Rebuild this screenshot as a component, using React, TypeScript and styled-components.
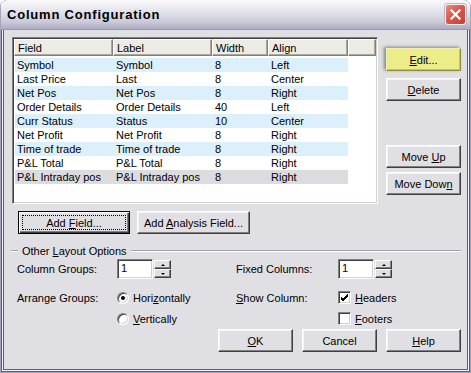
import React from "react";
import styled, { createGlobalStyle, css } from "styled-components";

const GlobalStyle = createGlobalStyle`
  html, body {
    margin: 0;
    padding: 0;
    background: #ffffff;
  }
  body {
    font-family: "Liberation Sans", Arial, sans-serif;
    font-size: 11px;
    color: #000;
  }
`;

const COLS = "99px 99px 56px 80px";

const rows = [
  ["Symbol", "Symbol", "8", "Left"],
  ["Last Price", "Last", "8", "Center"],
  ["Net Pos", "Net Pos", "8", "Right"],
  ["Order Details", "Order Details", "40", "Left"],
  ["Curr Status", "Status", "10", "Center"],
  ["Net Profit", "Net Profit", "8", "Right"],
  ["Time of trade", "Time of trade", "8", "Right"],
  ["P&L Total", "P&L Total", "8", "Right"],
  ["P&L Intraday pos", "P&L Intraday pos", "8", "Right"],
];

const Window = styled.div`
  width: 471px;
  height: 373px;
  box-sizing: border-box;
  display: flex;
  flex-direction: column;
  background: #e0dfe3;
  border-radius: 8px 8px 0 0;
  overflow: hidden;
  box-shadow: inset 0 0 0 1px #a4a3bb, inset 0 0 0 2px #5e5d7c,
    inset 0 0 0 3px #f3f3f7, inset 0 0 0 4px #5e5d7c;
`;

const TitleBar = styled.div`
  height: 30px;
  flex: none;
  display: flex;
  align-items: center;
  justify-content: space-between;
  padding: 0 5px 1px 7px;
  box-sizing: border-box;
  background: linear-gradient(
    #fbfbfd 0%,
    #ebebf1 25%,
    #dcdce6 50%,
    #c8c8d6 75%,
    #aeadc4 95%,
    #8f8eaa 100%
  );
  box-shadow: inset 1px 0 #a4a3bb, inset -1px 0 #a4a3bb;
`;

const Title = styled.span`
  font-family: "Liberation Sans", Arial, sans-serif;
  font-weight: bold;
  font-size: 13px;
  letter-spacing: 0.8px;
  color: #000;
`;

const CloseButton = styled.div`
  width: 21px;
  height: 21px;
  box-sizing: border-box;
  border: 1px solid #f4f0f0;
  border-radius: 3px;
  background: linear-gradient(135deg, #ec8a7c 0%, #d9594b 45%, #c8412f 100%);
  display: flex;
  align-items: center;
  justify-content: center;
  box-shadow: 0 0 0 1px #b8b6c8;
`;

const Client = styled.div`
  flex: 1;
  display: flex;
  flex-direction: column;
  padding: 7px 10px 0 12px;
`;

const TopRow = styled.div`
  display: flex;
  gap: 8px;
  height: 167px;
`;

const sunken = css`
  box-sizing: border-box;
  border: 1px solid;
  border-color: #808080 #ffffff #ffffff #808080;
  box-shadow: inset 1px 1px #404040, inset -1px -1px #d4d0c8;
`;

const ListView = styled.div`
  ${sunken};
  width: 366px;
  height: 167px;
  background: #ffffff;
  padding: 1px;
`;

const HeaderRow = styled.div`
  display: grid;
  grid-template-columns: ${COLS} 1fr;
  height: 17px;
`;

const HeaderCell = styled.div`
  box-sizing: border-box;
  background: #ecebe6;
  border-top: 1px solid #ffffff;
  border-left: 1px solid #ffffff;
  border-right: 1px solid #808080;
  border-bottom: 1px solid #808080;
  box-shadow: inset -1px -1px #aca899;
  padding: 1px 0 0 3px;
  line-height: 14px;
  white-space: nowrap;
  overflow: hidden;
`;

const Rows = styled.div`
  margin-top: 2px;
`;

const Row = styled.div<{ $tone: "blue" | "white" | "gray" }>`
  display: grid;
  grid-template-columns: ${COLS};
  width: 333px;
  margin-left: 1px;
  height: 14px;
  line-height: 14px;
  background: ${(p) =>
    p.$tone === "blue" ? "#dcf0fc" : p.$tone === "gray" ? "#dcdbe0" : "#ffffff"};
`;

const Cell = styled.div`
  padding-left: 2px;
  white-space: nowrap;
  overflow: hidden;
`;

const SideButtons = styled.div`
  display: flex;
  flex-direction: column;
  width: 75px;
  padding: 11px 0 9px;
  box-sizing: border-box;
`;

const Button = styled.div<{ $w?: number; $mt?: number; $default?: boolean; $hot?: boolean }>`
  width: ${(p) => p.$w ?? 75}px;
  height: 23px;
  margin-top: ${(p) => p.$mt ?? 0}px;
  box-sizing: border-box;
  display: flex;
  align-items: center;
  justify-content: center;
  position: relative;
  background: #e0dfe3;
  border: 1px solid;
  border-color: #ffffff #404040 #404040 #ffffff;
  box-shadow: inset -1px -1px #808080, inset 1px 1px #f4f4f6;
  flex: none;
  ${(p) =>
    p.$default &&
    css`
      border: 1px solid #000;
      box-shadow: inset 1px 1px #ffffff, inset -1px -1px #404040,
        inset -2px -2px #808080;
      &::after {
        content: "";
        position: absolute;
        inset: 3px;
        border: 1px dotted #000;
      }
    `}
  ${(p) =>
    p.$hot &&
    css`
      background: #ecec88;
      border-color: #f2f2b8 #8e8e46 #8e8e46 #f2f2b8;
      box-shadow: inset -1px -1px #c4c468, -2px -1px 3px rgba(60, 60, 60, 0.55);
    `}
`;

const MoveUp = styled(Button)`
  margin-top: auto;
`;

const FieldButtons = styled.div`
  display: flex;
  gap: 7px;
  margin-top: 7px;
  padding-left: 6px;
`;

const GroupHeading = styled.div`
  display: flex;
  align-items: center;
  gap: 4px;
  margin-top: 10px;
  height: 14px;
  width: 449px;
  &::before,
  &::after {
    content: "";
    height: 0;
    border-top: 1px solid #a0a0a8;
    border-bottom: 1px solid #ffffff;
  }
  &::before {
    width: 7px;
    margin-left: -1px;
  }
  &::after {
    flex: 1;
  }
`;

const OptionsGrid = styled.div`
  display: grid;
  grid-template-columns: 100px 119px 102px auto;
  grid-template-rows: 28px 21px 21px;
  align-items: center;
  padding-left: 5px;
  margin-top: 1px;
`;

const TopCell = styled.div`
  align-self: start;
  height: 20px;
  display: flex;
  align-items: center;
`;

const Label = styled.span``;

const Spin = styled.div`
  display: flex;
  gap: 1px;
  height: 20px;
`;

const SpinEdit = styled.div`
  ${sunken};
  width: 36px;
  height: 20px;
  background: #fff;
  padding-left: 3px;
  line-height: 17px;
`;

const SpinButtons = styled.div`
  display: flex;
  flex-direction: column;
  width: 17px;
  padding: 1px 0;
  box-sizing: border-box;
`;

const SpinHalf = styled.div`
  flex: 1;
  box-sizing: border-box;
  background: #e0dfe3;
  border: 1px solid;
  border-color: #ffffff #404040 #404040 #ffffff;
  box-shadow: inset -1px -1px #808080;
  display: flex;
  align-items: center;
  justify-content: center;
`;

const Arrow = styled.div<{ $down?: boolean }>`
  width: 0;
  height: 0;
  border-left: 2px solid transparent;
  border-right: 2px solid transparent;
  ${(p) =>
    p.$down
      ? "border-top: 2px solid #000;"
      : "border-bottom: 2px solid #000;"}
`;

const Choice = styled.label`
  display: flex;
  align-items: center;
  gap: 4px;
`;

const Radio = styled.span<{ $on?: boolean }>`
  width: 12px;
  height: 12px;
  box-sizing: border-box;
  border-radius: 50%;
  background: #fff;
  border: 1px solid;
  border-color: #808080 #ffffff #ffffff #808080;
  box-shadow: inset 1px 1px #404040, inset -1px -1px #d4d0c8;
  display: flex;
  align-items: center;
  justify-content: center;
  &::after {
    content: "";
    width: 4px;
    height: 4px;
    border-radius: 50%;
    background: ${(p) => (p.$on ? "#000" : "transparent")};
  }
`;

const Check = styled.span`
  ${sunken};
  width: 13px;
  height: 13px;
  background: #fff;
  display: flex;
  align-items: center;
  justify-content: center;
`;

const DialogButtons = styled.div`
  display: flex;
  justify-content: flex-end;
  gap: 9px;
  width: 449px;
`;

const CheckMark = () => (
  <svg width="9" height="9" viewBox="0 0 9 9">
    <path d="M1 4 L3 6 L8 1 M1 5 L3 7 L8 2 M1 6 L3 8 L8 3" stroke="#000" strokeWidth="1" fill="none" />
  </svg>
);

const CloseX = () => (
  <svg width="11" height="11" viewBox="0 0 11 11">
    <path d="M1.5 1.5 L9.5 9.5 M9.5 1.5 L1.5 9.5" stroke="#fff" strokeWidth="2.2" strokeLinecap="square" />
  </svg>
);

const SpinBox = () => (
  <Spin>
    <SpinEdit>1</SpinEdit>
    <SpinButtons>
      <SpinHalf>
        <Arrow />
      </SpinHalf>
      <SpinHalf>
        <Arrow $down />
      </SpinHalf>
    </SpinButtons>
  </Spin>
);

const toneFor = (i: number) =>
  i === rows.length - 1 ? "gray" : i % 2 === 0 ? "blue" : "white";

export default function App() {
  return (
    <>
      <GlobalStyle />
      <Window>
        <TitleBar>
          <Title>Column Configuration</Title>
          <CloseButton>
            <CloseX />
          </CloseButton>
        </TitleBar>
        <Client>
          <TopRow>
            <ListView>
              <HeaderRow>
                <HeaderCell>Field</HeaderCell>
                <HeaderCell>Label</HeaderCell>
                <HeaderCell>Width</HeaderCell>
                <HeaderCell>Align</HeaderCell>
                <HeaderCell />
              </HeaderRow>
              <Rows>
                {rows.map((r, i) => (
                  <Row key={i} $tone={toneFor(i)}>
                    {r.map((c, j) => (
                      <Cell key={j}>{c}</Cell>
                    ))}
                  </Row>
                ))}
              </Rows>
            </ListView>
            <SideButtons>
              <Button $hot>
                <span>
                  <u>E</u>dit...
                </span>
              </Button>
              <Button $mt={7}>
                <span>
                  <u>D</u>elete
                </span>
              </Button>
              <MoveUp>
                <span>
                  Move <u>U</u>p
                </span>
              </MoveUp>
              <Button $mt={4}>
                <span>
                  Move Dow<u>n</u>
                </span>
              </Button>
            </SideButtons>
          </TopRow>
          <FieldButtons>
            <Button $w={112} $default>
              <span>
                Add <u>F</u>ield...
              </span>
            </Button>
            <Button $w={113}>
              <span>
                Add <u>A</u>nalysis Field...
              </span>
            </Button>
          </FieldButtons>
          <GroupHeading>
            <span>
              Other <u>L</u>ayout Options
            </span>
          </GroupHeading>
          <OptionsGrid>
            <TopCell>
              <Label>Column Groups:</Label>
            </TopCell>
            <TopCell>
              <SpinBox />
            </TopCell>
            <TopCell>
              <Label>Fixed Columns:</Label>
            </TopCell>
            <TopCell>
              <SpinBox />
            </TopCell>

            <Label>Arrange Groups:</Label>
            <Choice>
              <Radio $on />
              <span>
                Hori<u>z</u>ontally
              </span>
            </Choice>
            <Label>
              <u>S</u>how Column:
            </Label>
            <Choice>
              <Check>
                <CheckMark />
              </Check>
              <span>
                <u>H</u>eaders
              </span>
            </Choice>

            <span />
            <Choice>
              <Radio />
              <span>
                <u>V</u>ertically
              </span>
            </Choice>
            <span />
            <Choice>
              <Check />
              <span>
                <u>F</u>ooters
              </span>
            </Choice>
          </OptionsGrid>
          <DialogButtons>
            <Button>
              <span>
                <u>O</u>K
              </span>
            </Button>
            <Button>
              <span>Cancel</span>
            </Button>
            <Button>
              <span>
                <u>H</u>elp
              </span>
            </Button>
          </DialogButtons>
        </Client>
      </Window>
    </>
  );
}
